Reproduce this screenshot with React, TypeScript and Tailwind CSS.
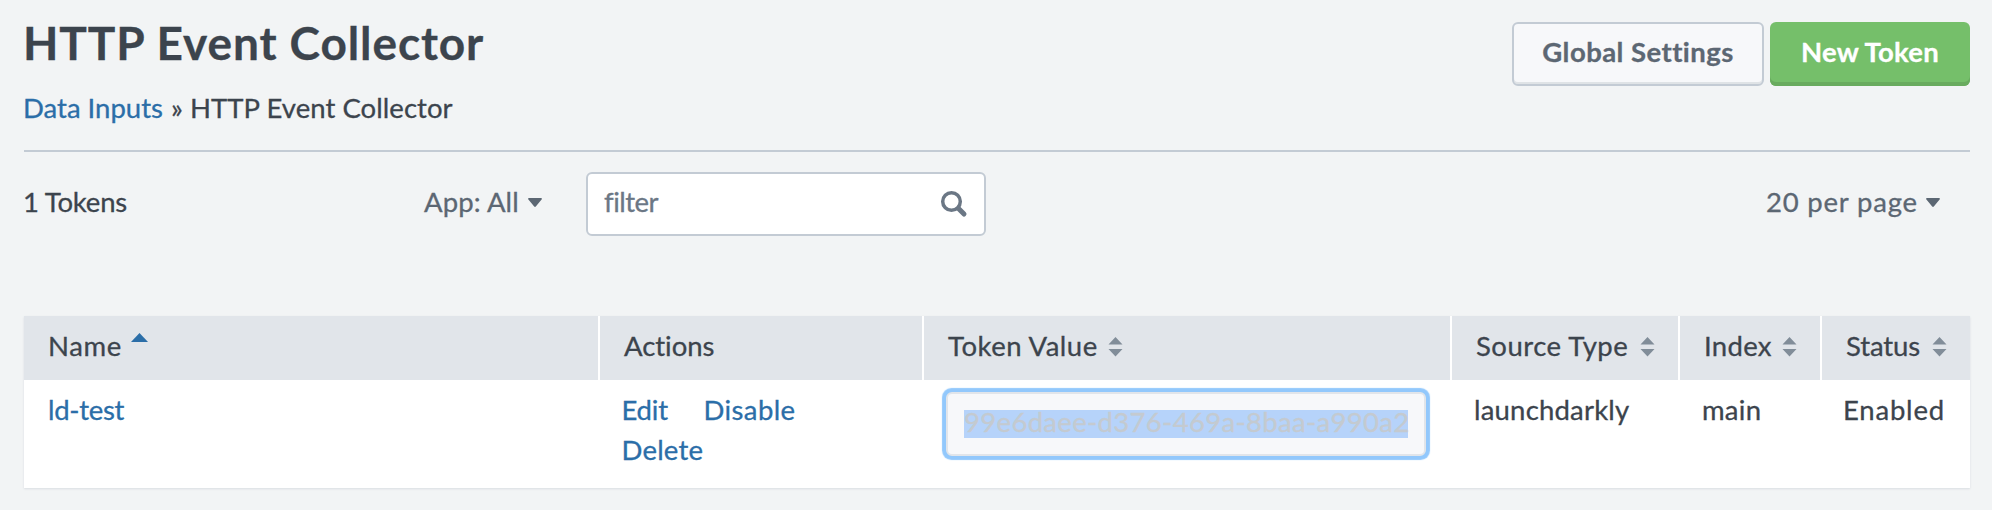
import React from "react";

function CaretDown() {
  return (
    <svg width="14" height="9" viewBox="0 0 14 9" fill="#5c6773">
      <path d="M1 0h12c.9 0 1.2.9.6 1.6L7.8 8.5c-.5.6-1.1.6-1.6 0L.4 1.6C-.2.9.1 0 1 0z" />
    </svg>
  );
}

function SortIcon() {
  return (
    <svg width="15" height="20" viewBox="0 0 15 20" fill="#818d99" className="mt-[3px]">
      <path d="M7.5 0L14.5 7.5H.5zM.5 12h14l-7 7.5z" />
    </svg>
  );
}

const th = "flex items-center border-r-2 border-white bg-[#e1e5ea] pb-[5px] pl-6";

export default function App() {
  return (
    <div className="h-[510px] w-[1992px] overflow-hidden bg-[#f2f4f5] px-6 pr-[22px] font-['Lato',sans-serif] text-[27.5px] leading-[33px] whitespace-nowrap text-[#3c444d] [-webkit-text-stroke:0.3px]">
      <header className="flex h-[152px] justify-between border-b-2 border-[#c3cbd4]">
        <div className="pt-[15px]">
          <h1 className="-ml-px text-[46px] leading-[55px] font-bold tracking-[0.9px]">HTTP Event Collector</h1>
          <nav className="mt-[21px] flex">
            <a className="-ml-px w-[148px] text-[#2b6ea8]">Data Inputs</a>
            <span className="w-[19px]">»</span>
            <span className="tracking-[0.05px]">HTTP Event Collector</span>
          </nav>
        </div>
        <div className="flex gap-[6px] pt-[22px]">
          <button className="flex h-16 w-[252px] justify-center rounded-[6px] border-2 border-[#c3cbd4] bg-[#f7f8fa] pt-[11px] font-bold tracking-[0.45px] text-[#5c6773] shadow-[inset_0_-2px_0_#dfe3e6]">
            Global Settings
          </button>
          <button className="flex h-16 w-[200px] justify-center rounded-[6px] bg-[#75bf6a] pt-[13px] font-bold tracking-[0.25px] text-white shadow-[inset_0_-4px_0_#69ab5f]">
            New Token
          </button>
        </div>
      </header>

      <div className="flex h-[164px] pt-5">
        <div className="-ml-px w-[401px] pt-[13px] tracking-[-0.2px]">1 Tokens</div>
        <div className="flex w-[162px] pt-[13px] text-[#5c6773]">
          <span className="w-[104px] tracking-[0.1px]">App: All</span>
          <span className="pt-[13px]"><CaretDown /></span>
        </div>
        <div className="flex h-16 w-[400px] justify-between rounded-[6px] border-2 border-[#c3cbd4] bg-white pt-[11px] pr-4 pl-4 tracking-[-0.5px] text-[#6b7785]">
          <span>filter</span>
          <svg width="28" height="28" viewBox="0 0 28 28" fill="none" stroke="#6b7785" className="mt-[5px]">
            <circle cx="11.5" cy="11.5" r="8.8" strokeWidth="3.5" />
            <path d="M18.5 18.5l5.5 5.5" strokeWidth="5" strokeLinecap="round" />
          </svg>
        </div>
        <div className="ml-auto flex pt-[13px] pr-[30px] text-[#5c6773]">
          <span className="w-[160px] tracking-[0.8px]">20 per page</span>
          <span className="pt-[13px]"><CaretDown /></span>
        </div>
      </div>

      <div className="grid grid-cols-[576px_324px_528px_228px_142px_148px] grid-rows-[64px_108px] bg-white shadow-[0_1px_2px_#d9dde2]">
        <div className={th}>
          <span className="w-[83px] tracking-[0.6px]">Name</span>
          <svg width="17" height="9" viewBox="0 0 17 9" fill="#2b6ea8" className="mb-[17px]">
            <path d="M8.5 0L17 9H0z" />
          </svg>
        </div>
        <div className={`${th} tracking-[-0.05px]`}>Actions</div>
        <div className={th}>
          <span className="w-[160px] tracking-[0.5px]">Token Value</span>
          <SortIcon />
        </div>
        <div className={th}>
          <span className="w-[163.5px] tracking-[0.5px]">Source Type</span>
          <SortIcon />
        </div>
        <div className={th}>
          <span className="w-[77.5px] tracking-[0.3px]">Index</span>
          <SortIcon />
        </div>
        <div className="flex items-center bg-[#e1e5ea] pb-[5px] pl-6">
          <span className="w-[85.5px] tracking-[-0.1px]">Status</span>
          <SortIcon />
        </div>

        <div className="pt-[13px] pl-6 tracking-[-0.3px] text-[#2b6ea8]">ld-test</div>
        <div className="flex flex-col gap-[7px] pt-[13px] pl-[21.5px] text-[#2b6ea8]">
          <div className="flex">
            <a className="w-[82px] tracking-[-0.2px]">Edit</a>
            <a className="tracking-[0.4px]">Disable</a>
          </div>
          <a className="tracking-[0.2px]">Delete</a>
        </div>
        <div className="pt-3 pl-[22px]">
          <div className="h-16 w-[480px] rounded-[6px] border-2 border-[#e1e5ea] bg-[#f7f8fa] pt-4 pl-4 shadow-[0_0_1px_3.5px_#92c8fc]">
            <div className="flex h-7 w-[444px] items-center bg-[#b6d3fa]">
              <span className="pb-[5px] tracking-[0.32px] text-[#c4cad0]">99e6daee-d376-469a-8baa-a990a2</span>
            </div>
          </div>
        </div>
        <div className="pt-[13px] pl-[22px] tracking-[0.2px]">launchdarkly</div>
        <div className="pt-[13px] pl-[22px] tracking-[0.25px]">main</div>
        <div className="pt-[13px] pl-[21px] tracking-[0.8px]">Enabled</div>
      </div>
    </div>
  );
}
